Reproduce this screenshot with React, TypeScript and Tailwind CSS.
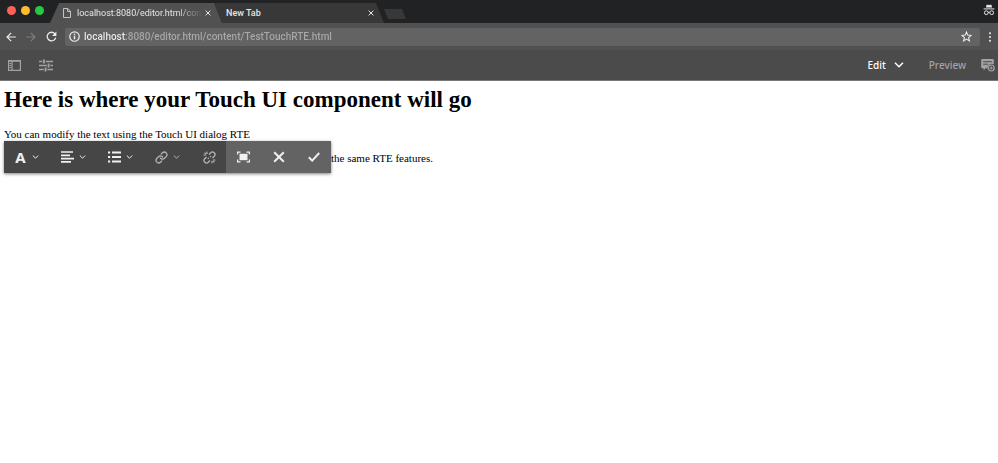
import React, { useState } from 'react';

type IconProps = { className?: string };

const CloseIcon: React.FC<IconProps> = ({ className }) => (
    <svg viewBox="0 0 6 6" className={className} fill="none" stroke="currentColor" strokeWidth="1">
        <path d="M.6.6l4.8 4.8M5.4.6L.6 5.4" />
    </svg>
);

const PageIcon: React.FC<IconProps> = ({ className }) => (
    <svg viewBox="0 0 8 10" className={className} fill="none" stroke="currentColor" strokeWidth="1">
        <path d="M.5.5h4.3l2.7 2.8v6.2h-7zM4.6.5v3h2.9" />
    </svg>
);

const ChevronIcon: React.FC<IconProps> = ({ className }) => (
    <svg viewBox="0 0 10 6" className={className} fill="none" stroke="currentColor" strokeWidth="1.5">
        <path d="M1 .8l4 4 4-4" />
    </svg>
);

const BackIcon: React.FC<IconProps> = ({ className }) => (
    <svg viewBox="0 0 10 10" className={className} fill="none" stroke="currentColor" strokeWidth="1.2">
        <path d="M9.8 5H1M5.2.8L1 5l4.2 4.2" />
    </svg>
);

const ReloadIcon: React.FC<IconProps> = ({ className }) => (
    <svg viewBox="0 0 11 11" className={className} fill="none">
        <path d="M8.9 2.9A4.3 4.3 0 1 0 9.7 6.6" stroke="currentColor" strokeWidth="1.3" />
        <path d="M10.4.6v4.3H6.1z" fill="currentColor" />
    </svg>
);

const InfoIcon: React.FC<IconProps> = ({ className }) => (
    <svg viewBox="0 0 10 10" className={className} fill="none" stroke="currentColor" strokeWidth="1.1">
        <circle cx="5" cy="5" r="4.3" />
        <path d="M5 4.4v3.1M5 2.4v1.2" strokeWidth="1.3" />
    </svg>
);

const StarIcon: React.FC<IconProps> = ({ className }) => (
    <svg viewBox="0 0 11 11" className={className} fill="none" stroke="currentColor" strokeWidth="1.1">
        <path d="M5.5 1l1.3 3.1 3.3.3-2.5 2.2.8 3.3-2.9-1.8-2.9 1.8.8-3.3L.9 4.4l3.3-.3z" />
    </svg>
);

const IncognitoIcon: React.FC<IconProps> = ({ className }) => (
    <svg viewBox="0 0 12 12" className={className} fill="none">
        <path d="M3.6.8h1.6l.8.5.8-.5h1.6l.7 2.6H2.9z" fill="currentColor" />
        <path d="M.6 4.4h10.8v1H.6z" fill="currentColor" />
        <g stroke="currentColor" strokeWidth="1">
            <circle cx="3.3" cy="8.7" r="1.9" />
            <circle cx="8.7" cy="8.7" r="1.9" />
            <path d="M5.2 8.3h1.6" />
        </g>
    </svg>
);

const SidePanelIcon: React.FC<IconProps> = ({ className }) => (
    <svg viewBox="0 0 13 11" className={className} fill="none" stroke="currentColor">
        <path d="M.6.6h11.8v9.8H.6zM4 .6v9.8" strokeWidth="1.2" />
        <path d="M.6 1h11.8" strokeWidth="1.4" />
        <path d="M1.6 3.5h1.5M1.6 5.5h1.5M1.6 7.5h1.5" strokeWidth="1" />
    </svg>
);

const SlidersIcon: React.FC<IconProps> = ({ className }) => (
    <svg viewBox="0 0 14 13" className={className} fill="none" stroke="currentColor">
        <path d="M0 2.5h3.2M6.6 2.5H14M0 6.5h7.8M11.4 6.5H14M0 10.5h4.8M8.4 10.5H14" strokeWidth="1.3" />
        <path d="M4.9.5v4M9.6 4.5v4M6.6 8.5v4" strokeWidth="1.9" />
    </svg>
);

const AnnotateIcon: React.FC<IconProps> = ({ className }) => (
    <svg viewBox="0 0 14 13" className={className} fill="none">
        <path d="M1.2 0h10.6a1 1 0 0 1 1 1v4.3a4.3 4.3 0 0 0-6.3 3.9H4.4L2.6 11.6V9.2H1.2a1 1 0 0 1-1-1V1a1 1 0 0 1 1-1z" fill="currentColor" />
        <path d="M2.2 2.7h8.6M2.2 5.2h5" stroke="#4b4b4b" strokeWidth="1" />
        <circle cx="10.2" cy="9" r="3" stroke="currentColor" strokeWidth="1.2" />
        <path d="M10.2 7.4v3.2M8.6 9h3.2" stroke="currentColor" strokeWidth="1" />
    </svg>
);

const AlignIcon: React.FC<IconProps> = ({ className }) => (
    <svg viewBox="0 0 13 12" className={className} fill="none" stroke="currentColor" strokeWidth="1.7">
        <path d="M0 1h12M0 4.3h9M0 7.6h13M0 10.9h10" />
    </svg>
);

const ListIcon: React.FC<IconProps> = ({ className }) => (
    <svg viewBox="0 0 13 12" className={className} fill="none" stroke="currentColor" strokeWidth="1.9">
        <path d="M0 1.5h2.2M0 6h2.2M0 10.5h2.2M4 1.5h9M4 6h9M4 10.5h9" />
    </svg>
);

const LinkIcon: React.FC<IconProps> = ({ className }) => (
    <svg viewBox="0 0 24 24" className={className} fill="none" stroke="currentColor" strokeWidth="2.4" strokeLinecap="round">
        <path d="M10 13a5 5 0 0 0 7.5.5l3.5-3.5a5 5 0 0 0-7-7l-2.5 2.5" />
        <path d="M14 11a5 5 0 0 0-7.5-.5L3 14a5 5 0 0 0 7 7l2.5-2.5" />
    </svg>
);

const UnlinkIcon: React.FC<IconProps> = ({ className }) => (
    <svg viewBox="0 0 24 24" className={className} fill="none" stroke="currentColor" strokeWidth="2.4">
        <path d="M11 6.5l3.3-3.3a4.6 4.6 0 0 1 6.5 6.5L17.5 13" />
        <path d="M13 17.5l-3.3 3.3a4.6 4.6 0 0 1-6.5-6.5L6.5 11" />
        <path d="M9 14.5l1.8-1.8M13.2 11.3L15 9.5" />
        <path d="M7 1l.8 4.2M1 7l4.2.8M17 23l-.8-4.2M23 17l-4.2-.8M3 3l3 3M21 21l-3-3" strokeWidth="2" />
    </svg>
);

const FullscreenIcon: React.FC<IconProps> = ({ className }) => (
    <svg viewBox="0 0 13 12" className={className} fill="none">
        <path d="M.6 3.6V1.1h2.9M9.5 1.1h2.9v2.5M12.4 8.4v2.5H9.5M3.5 10.9H.6V8.4" stroke="currentColor" strokeWidth="1.2" />
        <path d="M2.5 2.8h8v6.4h-8z" fill="currentColor" />
    </svg>
);

const CheckIcon: React.FC<IconProps> = ({ className }) => (
    <svg viewBox="0 0 12 10" className={className} fill="none" stroke="currentColor" strokeWidth="2">
        <path d="M.8 5.2l3.4 3.4L11.2 1" />
    </svg>
);

const rteMenus = [
    { label: 'Format', icon: <span className="w-[13px] text-[15px] leading-4 font-bold">A</span>, enabled: true },
    { label: 'Justify', icon: <AlignIcon className="h-3 w-[13px]" />, enabled: true },
    { label: 'Lists', icon: <ListIcon className="h-3 w-[13px]" />, enabled: true },
    { label: 'Hyperlink', icon: <LinkIcon className="h-[13px] w-[13px]" />, enabled: false },
];

const rteActions = [
    { label: 'Fullscreen', icon: <FullscreenIcon className="h-3 w-[13px]" /> },
    { label: 'Close', icon: <CloseIcon className="h-3 w-3" /> },
    { label: 'Save', icon: <CheckIcon className="h-[10px] w-3" /> },
];

const TabStrip: React.FC = () => (
    <div className="flex h-[23px] items-end bg-[#202223] pl-[7px] font-[Roboto,sans-serif] text-[9px] leading-4 text-[#e6e6e6]">
        <div className="flex gap-[5px] self-start pt-[6px]">
            <button aria-label="Close window" className="h-[9px] w-[9px] rounded-full bg-[#ff5f57]" />
            <button aria-label="Minimize window" className="h-[9px] w-[9px] rounded-full bg-[#ffbd2e]" />
            <button aria-label="Zoom window" className="h-[9px] w-[9px] rounded-full bg-[#28c940]" />
        </div>
        <div className="z-10 ml-[6px] flex h-5 w-[172px] items-center bg-[#515151] pr-[11px] pl-[13px] [clip-path:polygon(0_100%,9px_0,164px_0,100%_100%)]">
            <PageIcon className="h-[10px] w-2 shrink-0 text-[#c4c4c4]" />
            <span className="ml-[6px] flex-1 whitespace-nowrap [mask-image:linear-gradient(to_right,black_100px,transparent_126px)]">
                localhost:8080/editor.html/con
            </span>
            <button aria-label="Close tab">
                <CloseIcon className="h-[6px] w-[6px]" />
            </button>
        </div>
        <div className="-ml-2 flex h-5 w-[170px] items-center bg-[#383838] pr-[10px] pl-3 [clip-path:polygon(0_0,162px_0,100%_100%,8px_100%)]">
            <span className="flex-1 font-medium">New Tab</span>
            <button aria-label="Close tab">
                <CloseIcon className="h-[6px] w-[6px]" />
            </button>
        </div>
        <button
            aria-label="New tab"
            className="mb-1 h-[10px] w-[22px] bg-[#383838] [clip-path:polygon(0_0,18px_0,100%_100%,4px_100%)]"
        />
        <IncognitoIcon className="mt-1 mr-[3px] ml-auto h-3 w-3 self-start" />
    </div>
);

const AddressBar: React.FC = () => {
    const [url, setUrl] = useState('localhost:8080/editor.html/content/TestTouchRTE.html');

    return (
        <div className="flex h-[27px] items-center bg-[#515151] px-[6px] text-[#ececec]">
            <button aria-label="Back">
                <BackIcon className="h-[10px] w-[10px]" />
            </button>
            <button aria-label="Forward" className="ml-[10px] text-[#7d7d7d]">
                <BackIcon className="h-[10px] w-[10px] rotate-180" />
            </button>
            <button aria-label="Reload" className="ml-[10px]">
                <ReloadIcon className="h-[11px] w-[11px]" />
            </button>
            <div className="ml-2 flex h-[18px] flex-1 items-center rounded-xs bg-[#636363] px-1">
                <InfoIcon className="h-[11px] w-[11px] shrink-0" />
                {/* host is brighter than the path */}
                <input
                    aria-label="Address"
                    value={url}
                    onChange={e => setUrl(e.target.value)}
                    className="ml-1 h-4 min-w-0 flex-1 bg-[linear-gradient(to_right,#ececec_42px,#a8a8a8_42px)] bg-clip-text font-[Roboto,sans-serif] text-[10px] leading-4 font-medium text-transparent outline-none"
                />
                <button aria-label="Bookmark this page" className="mr-1">
                    <StarIcon className="h-[11px] w-[11px]" />
                </button>
            </div>
            <button aria-label="Menu" className="ml-2">
                <svg viewBox="0 0 4 10" className="h-[10px] w-1" fill="currentColor">
                    <circle cx="2" cy="1.2" r="1" />
                    <circle cx="2" cy="5" r="1" />
                    <circle cx="2" cy="8.8" r="1" />
                </svg>
            </button>
        </div>
    );
};

const EditorBar: React.FC = () => (
    <div className="flex h-[31px] items-center border-b border-[#777777] bg-[#4b4b4b] pr-[3px] pl-2 font-['Noto_Sans',sans-serif] text-[10px] leading-4 font-medium text-[#a3a3a3]">
        <button aria-label="Toggle side panel">
            <SidePanelIcon className="h-[11px] w-[13px]" />
        </button>
        <button aria-label="Page information" className="ml-[18px]">
            <SlidersIcon className="h-[13px] w-[14px]" />
        </button>
        <button className="ml-auto flex items-center gap-2 text-white">
            Edit
            <ChevronIcon className="h-[6px] w-[10px]" />
        </button>
        <button className="ml-[25px]">Preview</button>
        <button aria-label="Annotate" className="ml-[15px]">
            <AnnotateIcon className="h-[13px] w-[14px]" />
        </button>
    </div>
);

const RteToolbar: React.FC = () => (
    <div className="absolute top-[60px] left-1 flex h-8 bg-[#464646] font-['Noto_Sans',sans-serif] text-[#f0f0f0] shadow-[0_1px_3px_rgba(0,0,0,0.5)]">
        {rteMenus.map(menu => (
            <button
                key={menu.label}
                aria-label={menu.label}
                disabled={!menu.enabled}
                className="flex w-[47px] items-center gap-[5px] pl-[10px] disabled:text-[#b5b5b5]"
            >
                {menu.icon}
                <ChevronIcon className="h-1 w-[7px]" />
            </button>
        ))}
        <button aria-label="Unlink" disabled className="flex w-[34px] items-center justify-center text-[#b5b5b5]">
            <UnlinkIcon className="h-[13px] w-[13px]" />
        </button>
        <div className="flex bg-[#636363]">
            {rteActions.map(action => (
                <button key={action.label} aria-label={action.label} className="flex w-[35px] items-center justify-center">
                    {action.icon}
                </button>
            ))}
        </div>
    </div>
);

const App: React.FC = () => {
    return (
        <div className="min-h-screen bg-white">
            <TabStrip />
            <AddressBar />
            <EditorBar />
            <main className="relative px-1 pt-[5px] font-['Liberation_Serif',serif] text-[11px] leading-4 text-black">
                <h1 className="text-[23px] leading-7 font-bold">Here is where your Touch UI component will go</h1>
                <p className="mt-3">You can modify the text using the Touch UI dialog RTE</p>
                <p className="mt-2 pl-[327px]">the same RTE features.</p>
                <RteToolbar />
            </main>
        </div>
    );
};

export default App;
